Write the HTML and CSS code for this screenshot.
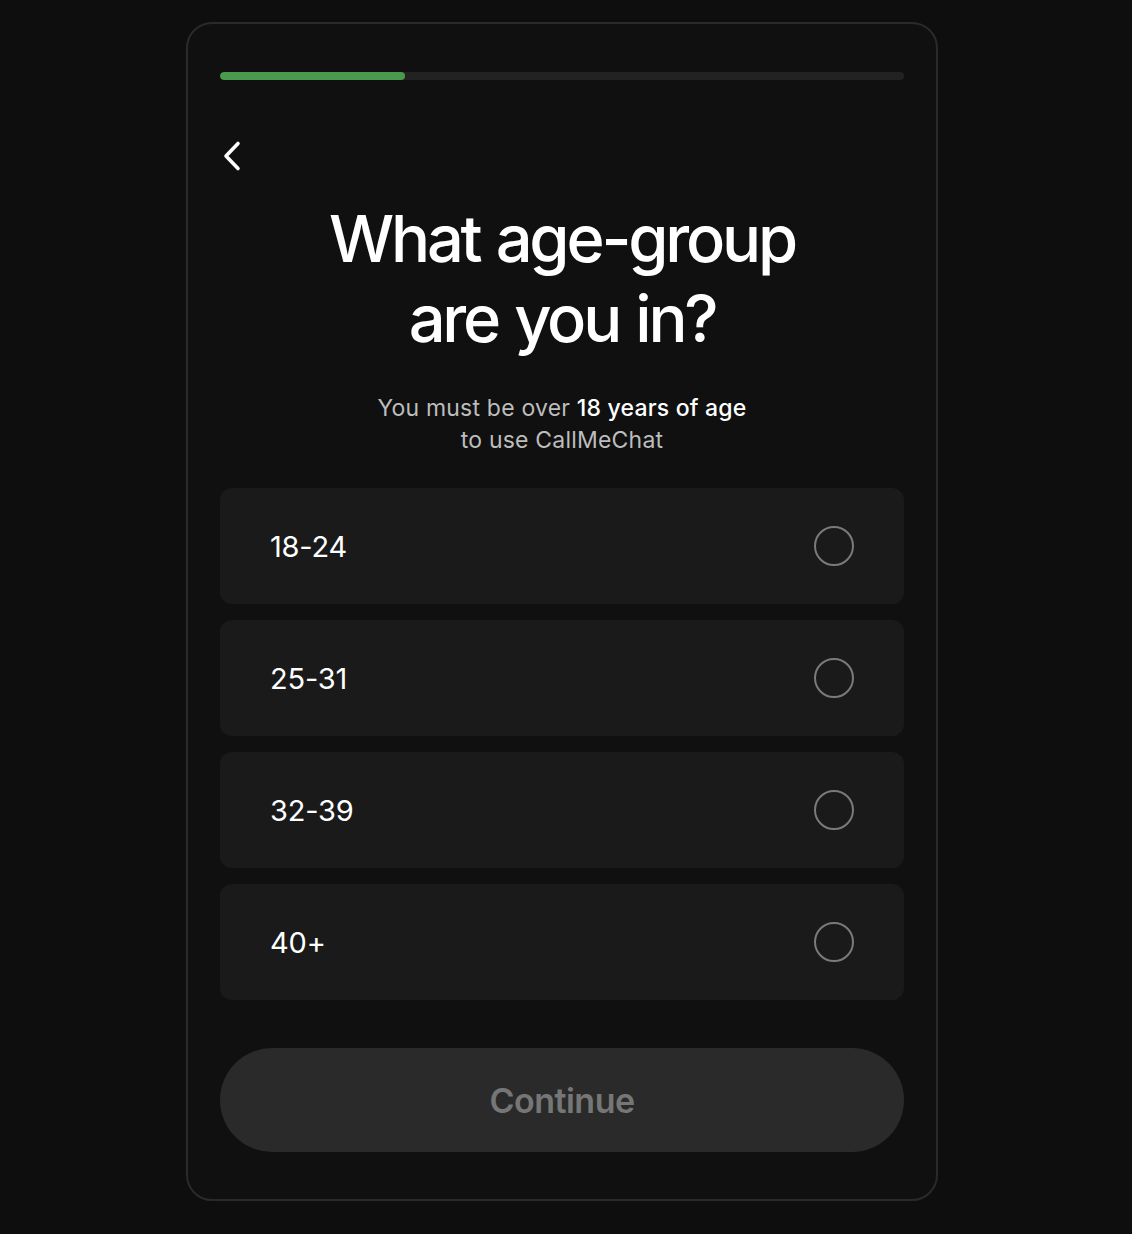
FILE: index.html
```html
<!DOCTYPE html>
<html lang="en">
<head>
    <meta charset="UTF-8">
    <meta name="viewport" content="width=device-width, initial-scale=1.0">
    <title>CallMeChat - Age group</title>
    <link rel="stylesheet" href="styles.css">
</head>
<body>

<div class="card">
    <div class="progress">
        <div class="progress-fill" style="width: 27%"></div>
    </div>

    <button class="back-btn" aria-label="Back">
        <svg width="22" height="32" viewBox="0 0 22 32" fill="none">
            <path d="M18 3.5 L6 16 L18 28.5" stroke="#fff" stroke-width="3.6" stroke-linecap="round" stroke-linejoin="round"/>
        </svg>
    </button>

    <h1>What age-group<br>are you in?</h1>

    <p class="subtitle">You must be over <strong>18 years of age</strong><br>to use CallMeChat</p>

    <div class="options">
        <label class="option">
            <span class="option-label">18-24</span>
            <span class="radio"></span>
        </label>
        <label class="option">
            <span class="option-label">25-31</span>
            <span class="radio"></span>
        </label>
        <label class="option">
            <span class="option-label">32-39</span>
            <span class="radio"></span>
        </label>
        <label class="option">
            <span class="option-label">40+</span>
            <span class="radio"></span>
        </label>
    </div>

    <button class="continue-btn" disabled>Continue</button>
</div>

</body>
</html>
```

FILE: styles.css
```css
body {
    margin: 0;
    padding: 22px 8px 34px 0;
    background-color: #0e0e0e;
    font-family: 'Inter', 'Noto Sans', sans-serif;
    color: #fff;
}

.card {
    box-sizing: border-box;
    width: 752px;
    margin: 0 auto;
    padding: 48px 32px 47px;
    border: 2px solid #2a2a2a;
    border-radius: 26px;
    background-color: #101010;
}

.progress {
    height: 8px;
    border-radius: 4px;
    background-color: #222;
    overflow: hidden;
}

.progress-fill {
    height: 100%;
    border-radius: 4px;
    background-color: #4a9a4e;
}

.back-btn {
    display: block;
    margin: 60px 0 0 0;
    padding: 0;
    border: none;
    background: none;
    cursor: pointer;
    line-height: 0;
}

h1 {
    margin: 27px 0 0;
    font-size: 65px;
    font-weight: 500;
    line-height: 80px;
    letter-spacing: -3.2px;
    word-spacing: 2px;
    text-align: center;
}

.subtitle {
    margin: 33px 0 0;
    font-size: 23px;
    line-height: 32px;
    color: #bdbdbd;
    text-align: center;
    letter-spacing: 0.2px;
}

.subtitle strong {
    font-weight: 500;
    color: #fff;
}

.options {
    display: flex;
    flex-direction: column;
    gap: 16px;
    margin-top: 32px;
}

.option {
    display: flex;
    align-items: center;
    justify-content: space-between;
    height: 116px;
    padding: 0 50px;
    border-radius: 12px;
    background-color: #1a1a1a;
    cursor: pointer;
}

.option-label {
    font-size: 29px;
    letter-spacing: -0.2px;
}

.radio {
    box-sizing: border-box;
    width: 40px;
    height: 40px;
    border: 2px solid #7a7a7a;
    border-radius: 50%;
}

.continue-btn {
    display: block;
    width: 100%;
    height: 104px;
    margin-top: 48px;
    border: none;
    border-radius: 52px;
    background-color: #2a2a2a;
    color: #767676;
    font-family: inherit;
    font-size: 34px;
    font-weight: 600;
    letter-spacing: -0.5px;
}
```
